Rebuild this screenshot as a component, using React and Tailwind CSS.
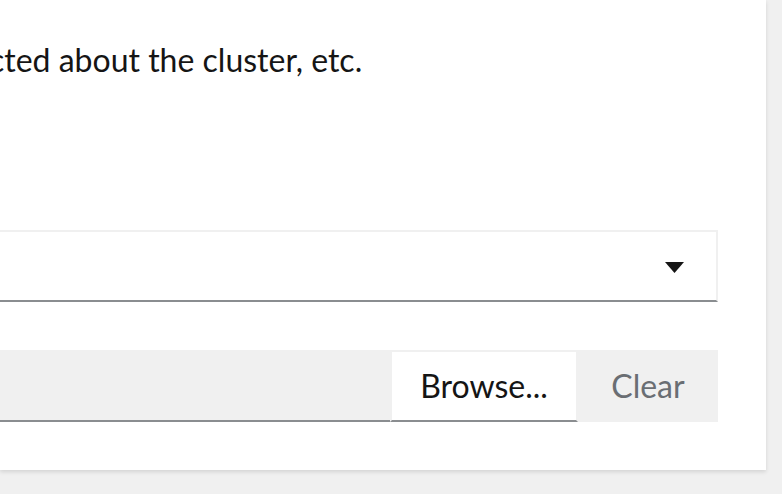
import React from 'react';

const App = () => {
  return (
    <div className="w-[782px] h-[494px] bg-[#f0f0f0] overflow-hidden font-['Lato',sans-serif]">
      <div className="w-[766px] h-[470px] bg-white shadow-[0_2px_4px_rgba(3,3,3,0.12)] pr-12 flex flex-col overflow-hidden">
        {/* description text, its start runs off the left edge */}
        <p className="mt-[37px] h-[46px] text-[32px] leading-[46px] text-[#151515] whitespace-nowrap ml-[-11px]">
          cted about the cluster, etc.
        </p>
        <div className="mt-[147px] h-[72px] flex items-center justify-end border-t-2 border-r-2 border-[#f0f0f0] border-b-2 border-b-[#8a8d90] pr-8">
          <svg width="19" height="11" viewBox="0 0 19 11" className="mt-[2px]">
            <polygon points="0,0 19,0 9.5,11" fill="#151515" />
          </svg>
        </div>
        <div className="mt-12 h-[72px] flex">
          <div className="flex-1 bg-[#f0f0f0] border-b-2 border-[#8a8d90]" />
          <button className="w-[188px] bg-white border-2 border-[#f0f0f0] border-b-[#8a8d90] text-[32px] text-[#151515] flex items-center justify-center">
            Browse...
          </button>
          <button className="w-[140px] bg-[#f0f0f0] text-[32px] text-[#6a6e73] flex items-center justify-center">
            Clear
          </button>
        </div>
      </div>
    </div>
  );
};

export default App;
